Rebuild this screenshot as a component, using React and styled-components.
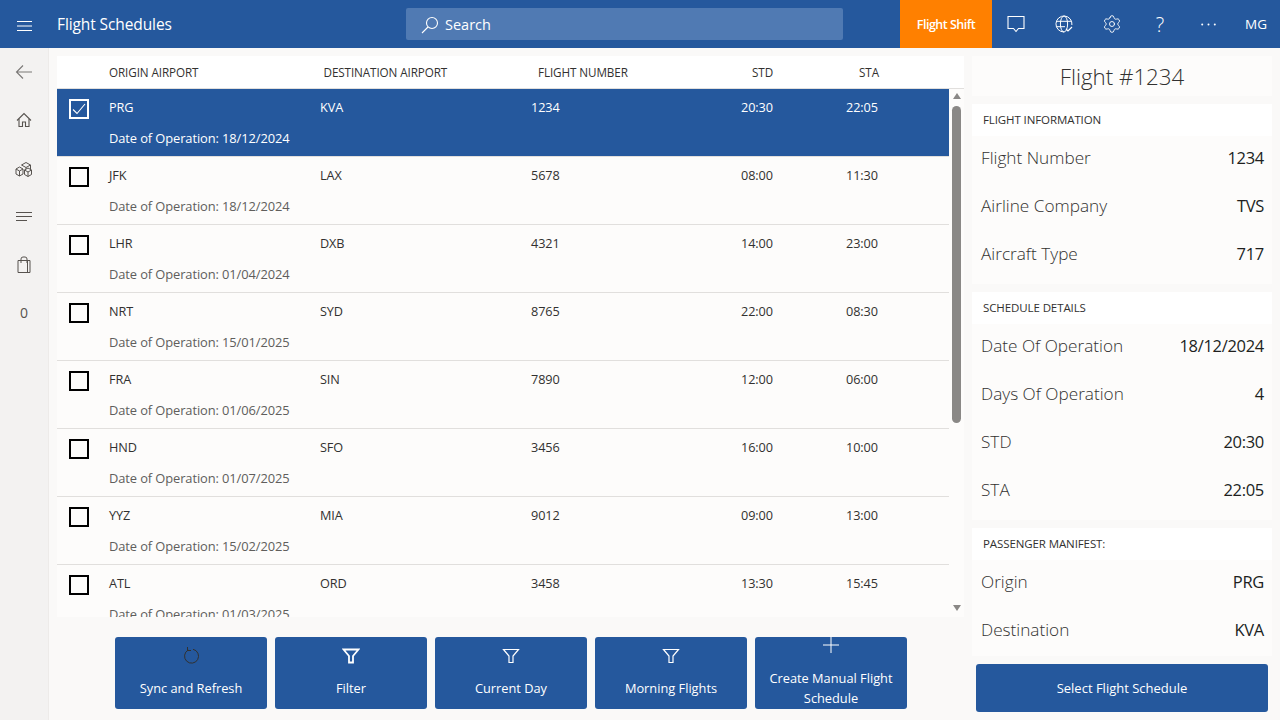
import React from "react";
import styled, { createGlobalStyle } from "styled-components";
import { Settings } from "lucide-react";

const flights = [
  { origin: "PRG", dest: "KVA", number: "1234", std: "20:30", sta: "22:05", date: "18/12/2024", selected: true },
  { origin: "JFK", dest: "LAX", number: "5678", std: "08:00", sta: "11:30", date: "18/12/2024" },
  { origin: "LHR", dest: "DXB", number: "4321", std: "14:00", sta: "23:00", date: "01/04/2024" },
  { origin: "NRT", dest: "SYD", number: "8765", std: "22:00", sta: "08:30", date: "15/01/2025" },
  { origin: "FRA", dest: "SIN", number: "7890", std: "12:00", sta: "06:00", date: "01/06/2025" },
  { origin: "HND", dest: "SFO", number: "3456", std: "16:00", sta: "10:00", date: "01/07/2025" },
  { origin: "YYZ", dest: "MIA", number: "9012", std: "09:00", sta: "13:00", date: "15/02/2025" },
  { origin: "ATL", dest: "ORD", number: "3458", std: "13:30", sta: "15:45", date: "01/03/2025" },
];

const sections = [
  {
    title: "FLIGHT INFORMATION",
    rows: [
      ["Flight Number", "1234"],
      ["Airline Company", "TVS"],
      ["Aircraft Type", "717"],
    ],
  },
  {
    title: "SCHEDULE DETAILS",
    rows: [
      ["Date Of Operation", "18/12/2024"],
      ["Days Of Operation", "4"],
      ["STD", "20:30"],
      ["STA", "22:05"],
    ],
  },
  {
    title: "PASSENGER MANIFEST:",
    tight: true,
    rows: [
      ["Origin", "PRG"],
      ["Destination", "KVA"],
    ],
  },
];

const FunnelIcon = ({ weight = 1.2 }) => (
  <svg width="18" height="16" viewBox="0 0 18 16" fill="none" stroke="currentColor" strokeWidth={weight}>
    <path d="M1.5 1.5h15L11 8v6.5H7V8z" />
  </svg>
);

const App = () => {
  return (
    <Page>
      <GlobalStyle />
      <TopBar>
        <MenuButton>
          <svg width="15" height="10" viewBox="0 0 15 10" stroke="currentColor" strokeWidth="1">
            <path d="M0 .5h15M0 5h15M0 9.5h15" />
          </svg>
        </MenuButton>
        <AppTitle>Flight Schedules</AppTitle>
        <SearchBox>
          <svg width="18" height="18" viewBox="0 0 18 18" fill="none" stroke="currentColor" strokeWidth="1.1">
            <circle cx="11" cy="7" r="5.5" />
            <path d="M7 11l-6 6" />
          </svg>
          <span>Search</span>
        </SearchBox>
        <Spacer />
        <ShiftButton>Flight Shift</ShiftButton>
        <BarIcon>
          <svg width="18" height="18" viewBox="0 0 18 18" fill="none" stroke="currentColor" strokeWidth="1.1">
            <path d="M1 1.5h16v12h-5.5L9 16.5l-2.5-3H1z" />
          </svg>
        </BarIcon>
        <BarIcon>
          <svg width="18" height="18" viewBox="0 0 18 18" fill="none" stroke="currentColor" strokeWidth="1">
            <path d="M16.9 10A8 8 0 1 0 9 17" />
            <ellipse cx="9" cy="9" rx="3.6" ry="8" />
            <path d="M1.4 6.3h15.2M1.4 11.7h8.6" />
            <path d="M11 14l2 2 4-4" strokeWidth="1.2" />
          </svg>
        </BarIcon>
        <BarIcon>
          <Settings size={20} strokeWidth={1.1} />
        </BarIcon>
        <BarIcon $question>?</BarIcon>
        <BarIcon>
          <svg width="15" height="3" viewBox="0 0 15 3" fill="currentColor">
            <circle cx="1.2" cy="1.5" r="1" />
            <circle cx="7.5" cy="1.5" r="1" />
            <circle cx="13.8" cy="1.5" r="1" />
          </svg>
        </BarIcon>
        <BarIcon $initials>MG</BarIcon>
      </TopBar>

      <Content>
        <SideNav>
          <NavItem $muted>
            <svg width="18" height="16" viewBox="0 0 18 16" fill="none" stroke="currentColor" strokeWidth="1.1">
              <path d="M17 8H1.5M8 1.5L1.5 8 8 14.5" />
            </svg>
          </NavItem>
          <NavItem>
            <svg width="16" height="16" viewBox="0 0 16 16" fill="none" stroke="currentColor" strokeWidth="1.1">
              <path d="M1 8.5L8 1.5l7 7" />
              <path d="M3 7v7.5h3.5V10h3v4.5H13V7" />
            </svg>
          </NavItem>
          <NavItem>
            <svg width="18" height="17" viewBox="0 0 18 17" fill="none" stroke="currentColor" strokeWidth="1">
              <path d="M6.5 5L11 2.5l4.5 2.5v4.5" />
              <path d="M6.5 5l4.5 2.5L15.5 5M11 7.5V9" />
              <path d="M1 9l3.5-2L8 9v5l-3.5 2L1 14z" />
              <path d="M1 9l3.5 2L8 9M4.5 11v5" />
              <path d="M9.5 10l3.5-2 3.5 2v4.5L13 16.5l-3.5-2z" />
              <path d="M9.5 10l3.5 2 3.5-2M13 12v4.5" />
            </svg>
          </NavItem>
          <NavItem>
            <svg width="16" height="9" viewBox="0 0 16 9" stroke="currentColor" strokeWidth="1">
              <path d="M0 .5h16M0 4.5h16M0 8.5h11" />
            </svg>
          </NavItem>
          <NavItem>
            <svg width="14" height="17" viewBox="0 0 14 17" fill="none" stroke="currentColor" strokeWidth="1">
              <path d="M1 4.5h12v12H1z" />
              <path d="M4 7V3a2 2 0 0 1 2-2h2a2 2 0 0 1 2 2v4" />
              <path d="M10.5 4.5v12" />
            </svg>
          </NavItem>
          <NavItem $count>0</NavItem>
        </SideNav>

        <MainColumn>
          <ListCard>
            <HeaderRow>
              <span>ORIGIN AIRPORT</span>
              <span>DESTINATION AIRPORT</span>
              <span>FLIGHT NUMBER</span>
              <span>STD</span>
              <span>STA</span>
            </HeaderRow>
            <Rows>
              {flights.map((f) => (
                <FlightRow key={f.origin} $selected={f.selected}>
                  <CheckBox $selected={f.selected}>
                    {f.selected && (
                      <svg width="16" height="16" viewBox="0 0 16 16" fill="none" stroke="currentColor" strokeWidth="1.1">
                        <path d="M2 8.5l4 4 8-9.5" />
                      </svg>
                    )}
                  </CheckBox>
                  <RowBody>
                    <Cells>
                      <span>{f.origin}</span>
                      <span>{f.dest}</span>
                      <span>{f.number}</span>
                      <span>{f.std}</span>
                      <span>{f.sta}</span>
                    </Cells>
                    <DateLine $selected={f.selected}>Date of Operation: {f.date}</DateLine>
                  </RowBody>
                </FlightRow>
              ))}
            </Rows>
            <ScrollTrack>
              <ArrowUp />
              <ScrollThumb />
              <ArrowDown />
            </ScrollTrack>
          </ListCard>

          <ActionBar>
            <ActionButton>
              <ActionIcon $dark>
                <svg width="16" height="17" viewBox="0 0 16 17" fill="none" stroke="currentColor" strokeWidth="1">
                  <path d="M5.2 3A7 7 0 1 0 10 2.3" />
                  <path d="M4.5 0v3.5H8" />
                </svg>
              </ActionIcon>
              <span>Sync and Refresh</span>
            </ActionButton>
            <ActionButton>
              <ActionIcon>
                <FunnelIcon weight={1.8} />
              </ActionIcon>
              <span>Filter</span>
            </ActionButton>
            <ActionButton>
              <ActionIcon>
                <FunnelIcon />
              </ActionIcon>
              <span>Current Day</span>
            </ActionButton>
            <ActionButton>
              <ActionIcon>
                <FunnelIcon />
              </ActionIcon>
              <span>Morning Flights</span>
            </ActionButton>
            <ActionButton $tall>
              <ActionIcon $tall>
                <svg width="16" height="16" viewBox="0 0 16 16" stroke="currentColor" strokeWidth="1">
                  <path d="M8 0v16M0 8h16" />
                </svg>
              </ActionIcon>
              <span>Create Manual Flight Schedule</span>
            </ActionButton>
          </ActionBar>
        </MainColumn>

        <DetailColumn>
          <DetailTitle>Flight #1234</DetailTitle>
          {sections.map((s) => (
            <Section key={s.title}>
              <SectionHead>{s.title}</SectionHead>
              <SectionBody $tight={s.tight}>
                {s.rows.map(([label, value]) => (
                  <DetailRow key={label}>
                    <DetailLabel>{label}</DetailLabel>
                    <DetailValue>{value}</DetailValue>
                  </DetailRow>
                ))}
              </SectionBody>
            </Section>
          ))}
          <SelectButton>Select Flight Schedule</SelectButton>
        </DetailColumn>
      </Content>
    </Page>
  );
};

const GlobalStyle = createGlobalStyle`
  html, body {
    margin: 0;
    padding: 0;
    height: 100%;
    overflow: hidden;
  }
  body {
    font-family: "Open Sans", "Noto Sans", "Liberation Sans", sans-serif;
    background-color: #faf9f8;
  }
  * {
    box-sizing: border-box;
  }
`;

const Page = styled.div`
  width: 1280px;
  height: 720px;
  display: flex;
  flex-direction: column;
  overflow: hidden;
`;

const TopBar = styled.div`
  height: 48px;
  flex: none;
  display: flex;
  align-items: center;
  background-color: #25589d;
  color: #ffffff;
`;

const MenuButton = styled.div`
  width: 48px;
  height: 48px;
  display: flex;
  align-items: center;
  justify-content: center;
  padding-top: 3px;
`;

const AppTitle = styled.div`
  width: 358px;
  padding-left: 9px;
  font-size: 15.5px;
  letter-spacing: -0.1px;
`;

const SearchBox = styled.div`
  width: 437px;
  height: 32px;
  display: flex;
  align-items: center;
  gap: 6px;
  padding: 1px 0 0 15px;
  border-radius: 2px;
  background-color: #507ab3;
  font-size: 14.5px;
`;

const Spacer = styled.div`
  flex: 1;
`;

const ShiftButton = styled.div`
  width: 92px;
  height: 48px;
  display: flex;
  align-items: center;
  justify-content: center;
  padding-top: 1px;
  background-color: #ff8000;
  font-size: 12.5px;
  font-weight: 600;
  letter-spacing: -0.5px;
`;

const BarIcon = styled.div`
  width: 48px;
  height: 48px;
  display: flex;
  align-items: center;
  justify-content: center;
  font-size: ${(p) => (p.$question ? "20px" : "13.5px")};
  font-weight: ${(p) => (p.$question ? 300 : 400)};
`;

const Content = styled.div`
  flex: 1;
  min-height: 0;
  display: flex;
`;

const SideNav = styled.div`
  width: 49px;
  flex: none;
  display: flex;
  flex-direction: column;
  background-color: #f3f2f1;
  border-right: 1px solid #edebe9;
`;

const NavItem = styled.div`
  height: 48px;
  display: flex;
  align-items: center;
  justify-content: center;
  color: ${(p) => (p.$muted ? "#7a7876" : "#57534f")};
  font-size: 14px;
`;

const MainColumn = styled.div`
  width: 907px;
  margin-left: 8px;
  padding-top: 8px;
  flex: none;
  display: flex;
  flex-direction: column;
`;

const ListCard = styled.div`
  position: relative;
  height: 561px;
  flex: none;
  display: flex;
  flex-direction: column;
  overflow: hidden;
  background-color: #fdfcfb;
`;

const HeaderRow = styled.div`
  height: 33px;
  flex: none;
  display: grid;
  grid-template-columns: 214.5px 214.5px 214px 107px 1fr;
  align-items: center;
  padding-left: 52px;
  background-color: #ffffff;
  border-bottom: 1px solid #e1dfdd;
  color: #323130;
  font-size: 11.7px;
  letter-spacing: -0.1px;
`;

const Rows = styled.div`
  width: 892px;
  flex: 1;
  min-height: 0;
`;

const FlightRow = styled.div`
  height: 68px;
  display: flex;
  padding-left: 12px;
  background-color: ${(p) => (p.$selected ? "#25589d" : "transparent")};
  border-bottom: 1px solid #e1dfdd;
  color: ${(p) => (p.$selected ? "#ffffff" : "#323130")};
`;

const CheckBox = styled.div`
  width: 20px;
  height: 20px;
  margin-top: 10px;
  flex: none;
  display: flex;
  align-items: center;
  justify-content: center;
  border: 2px solid ${(p) => (p.$selected ? "#ffffff" : "#000000")};
  color: #ffffff;
`;

const RowBody = styled.div`
  margin-left: 20px;
  flex: 1;
  display: flex;
  flex-direction: column;
`;

const Cells = styled.div`
  height: 36px;
  display: grid;
  grid-template-columns: 211px 211px 210px 105px 1fr;
  align-items: center;
  font-size: 12.7px;
  letter-spacing: -0.1px;
`;

const DateLine = styled.div`
  height: 26px;
  display: flex;
  align-items: center;
  color: ${(p) => (p.$selected ? "#ffffff" : "#605e5c")};
  font-size: 12.9px;
  letter-spacing: -0.1px;
`;

const ScrollTrack = styled.div`
  position: absolute;
  top: 37px;
  right: 3px;
  bottom: 0;
  width: 9px;
  display: flex;
  flex-direction: column;
  align-items: center;
`;

const ArrowUp = styled.div`
  width: 0;
  height: 0;
  flex: none;
  border-left: 4.5px solid transparent;
  border-right: 4.5px solid transparent;
  border-bottom: 6px solid #8a8886;
`;

const ScrollThumb = styled.div`
  width: 9px;
  height: 317px;
  margin-top: 7px;
  flex: none;
  border-radius: 4.5px;
  background-color: #8a8886;
`;

const ArrowDown = styled.div`
  width: 0;
  height: 0;
  flex: none;
  margin-top: 182px;
  border-left: 4.5px solid transparent;
  border-right: 4.5px solid transparent;
  border-top: 6px solid #8a8886;
`;

const ActionBar = styled.div`
  display: flex;
  justify-content: center;
  gap: 8px;
  padding-top: 20px;
  padding-left: 1px;
`;

const ActionButton = styled.div`
  width: 152px;
  height: 72px;
  display: flex;
  flex-direction: column;
  align-items: center;
  padding: ${(p) => (p.$tall ? "0 12px" : "0")};
  overflow: hidden;
  border-radius: 3px;
  background-color: #25589d;
  color: #ffffff;
  font-size: 12.8px;
  line-height: 20px;
  text-align: center;
`;

const ActionIcon = styled.div`
  height: ${(p) => (p.$tall ? "31px" : "41px")};
  flex: none;
  display: flex;
  align-items: ${(p) => (p.$tall ? "flex-start" : "center")};
  justify-content: center;
  padding-bottom: ${(p) => (p.$tall ? "0" : "4px")};
  color: ${(p) => (p.$dark ? "#323130" : "#ffffff")};
`;

const DetailColumn = styled.div`
  width: 300px;
  margin-left: 8px;
  padding-top: 8px;
  flex: none;
  display: flex;
  flex-direction: column;
`;

const DetailTitle = styled.div`
  height: 40px;
  flex: none;
  display: flex;
  align-items: center;
  justify-content: center;
  padding-top: 1px;
  background-color: #fdfcfb;
  color: #323130;
  font-size: 22.3px;
  font-weight: 300;
`;

const Section = styled.div`
  margin-top: 8px;
  flex: none;
  background-color: #fdfcfb;
`;

const SectionHead = styled.div`
  position: relative;
  z-index: 1;
  height: 32px;
  display: flex;
  align-items: center;
  padding: 0 0 1px 11px;
  background-color: #ffffff;
  color: #323130;
  font-size: 11.5px;
  letter-spacing: -0.1px;
`;

const SectionBody = styled.div`
  margin-top: -3px;
  padding: 0 8px ${(p) => (p.$tight ? "3px" : "7px")} 9px;
`;

const DetailRow = styled.div`
  height: 48px;
  display: flex;
  align-items: center;
  justify-content: space-between;
`;

const DetailLabel = styled.div`
  color: #323130;
  font-size: 17.2px;
  font-weight: 300;
`;

const DetailValue = styled.div`
  padding-top: 1px;
  color: #201f1e;
  font-size: 16.5px;
  font-weight: 500;
  letter-spacing: -0.3px;
`;

const SelectButton = styled.div`
  height: 48px;
  margin: 8px 4px 0;
  flex: none;
  display: flex;
  align-items: center;
  justify-content: center;
  border-radius: 3px;
  background-color: #25589d;
  color: #ffffff;
  font-size: 13px;
`;

export default App;
